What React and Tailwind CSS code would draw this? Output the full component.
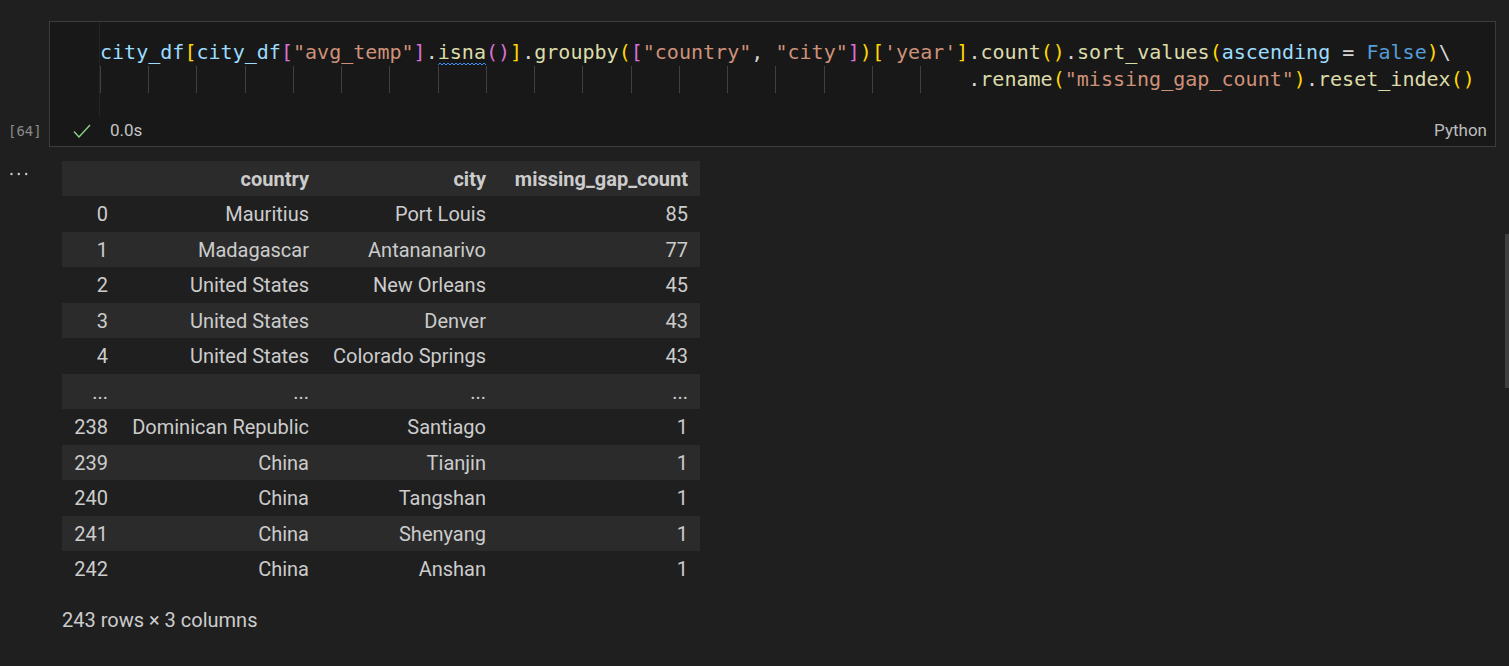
import React from "react";

const mono = { fontFamily: '"DejaVu Sans Mono", "Liberation Mono", monospace' };

function C({ c, children }) {
  return <span className={c}>{children}</span>;
}

function Squiggle() {
  return (
    <svg
      className="absolute left-0 bottom-[-1px]"
      width="49"
      height="5"
      viewBox="0 0 49 5"
    >
      <path d="M0 3 L2 1 L4 3 L6 1 L8 3 L10 1 L12 3 L14 1 L16 3 L18 1 L20 3 L22 1 L24 3 L26 1 L28 3 L30 1 L32 3 L34 1 L36 3 L38 1 L40 3 L42 1 L44 3 L46 1 L48 3" fill="none" stroke="#3794ff" strokeWidth="1" />
    </svg>
  );
}

const rows = [
  ["0", "Mauritius", "Port Louis", "85"],
  ["1", "Madagascar", "Antananarivo", "77"],
  ["2", "United States", "New Orleans", "45"],
  ["3", "United States", "Denver", "43"],
  ["4", "United States", "Colorado Springs", "43"],
  ["...", "...", "...", "..."],
  ["238", "Dominican Republic", "Santiago", "1"],
  ["239", "China", "Tianjin", "1"],
  ["240", "China", "Tangshan", "1"],
  ["241", "China", "Shenyang", "1"],
  ["242", "China", "Anshan", "1"],
];

export default function App() {
  const V = "text-[#9cdcfe]";
  const Y = "text-[#ffd700]";
  const P = "text-[#da70d6]";
  const S = "text-[#ce9178]";
  const F = "text-[#dcdcaa]";
  const W = "text-[#d4d4d4]";
  const K = "text-[#569cd6]";

  return (
    <div
      className="relative w-full h-[666px] overflow-hidden bg-[#1f1f1f] text-[#cccccc] pt-[21px]"
      style={{ fontFamily: 'Roboto, "Noto Sans", sans-serif' }}
    >
      {/* code cell */}
      <div className="flex">
        <div className="w-[49px] flex flex-col justify-end pb-[1px]">
          <div
            className="h-[30px] flex items-center pl-[8px] text-[14px] text-[#8a8a8a]"
            style={mono}
          >
            [64]
          </div>
        </div>
        <div className="w-[1447px] h-[126px] border border-[#3c3c3c] bg-[#181818] flex flex-col">
          <div className="flex">
            <div className="w-[49px]" />
            <div
              className="flex-1 border-l border-[#252525] pt-[17px] pb-[23px] text-[20.05px] leading-[27px] whitespace-pre"
              style={mono}
            >
              <div className="h-[27px]">
                <C c={V}>city_df</C>
                <C c={Y}>[</C>
                <C c={V}>city_df</C>
                <C c={P}>[</C>
                <C c={S}>"avg_temp"</C>
                <C c={P}>]</C>
                <C c={W}>.</C>
                <span className={`relative inline-block ${F}`}>
                  isna
                  <Squiggle />
                </span>
                <C c={P}>()</C>
                <C c={Y}>]</C>
                <C c={W}>.</C>
                <C c={F}>groupby</C>
                <C c={Y}>(</C>
                <C c={P}>[</C>
                <C c={S}>"country"</C>
                <C c={W}>, </C>
                <C c={S}>"city"</C>
                <C c={P}>]</C>
                <C c={Y}>)</C>
                <C c={Y}>[</C>
                <C c={S}>'year'</C>
                <C c={Y}>]</C>
                <C c={W}>.</C>
                <C c={F}>count</C>
                <C c={Y}>()</C>
                <C c={W}>.</C>
                <C c={F}>sort_values</C>
                <C c={Y}>(</C>
                <C c={V}>ascending</C>
                <C c={W}> = </C>
                <C c={K}>False</C>
                <C c={Y}>)</C>
                <C c={W}>\</C>
              </div>
              <div className="h-[27px] flex">
                {Array.from({ length: 18 }).map((_, i) => (
                  <span
                    key={i}
                    className="inline-block w-[4ch] h-[27px] border-l border-[#404040] shrink-0"
                  />
                ))}
                <span>
                  <C c={W}>.</C>
                  <C c={F}>rename</C>
                  <C c={Y}>(</C>
                  <C c={S}>"missing_gap_count"</C>
                  <C c={Y}>)</C>
                  <C c={W}>.</C>
                  <C c={F}>reset_index</C>
                  <C c={Y}>()</C>
                </span>
              </div>
            </div>
          </div>
          <div className="h-[30px] flex items-center pr-[8px]">
            <svg className="ml-[23px]" width="18" height="14" viewBox="0 0 18 14">
              <path d="M1 7.5 L6 13 L17 1" fill="none" stroke="#89d185" strokeWidth="1.4" />
            </svg>
            <span className="ml-[19px] text-[17px] text-[#c4c4c4]">0.0s</span>
            <span className="ml-auto text-[17px] text-[#bdbdbd]">Python</span>
          </div>
        </div>
      </div>

      {/* output */}
      <div className="flex mt-[14px]">
        <div className="w-[62px]">
          <svg className="ml-[10px] mt-[11px]" width="18" height="4" viewBox="0 0 18 4">
            <circle cx="1.5" cy="2" r="1.2" fill="#cccccc" />
            <circle cx="8.8" cy="2" r="1.2" fill="#cccccc" />
            <circle cx="16.2" cy="2" r="1.2" fill="#cccccc" />
          </svg>
        </div>
        <div>
          <table className="border-collapse text-[20px] table-fixed w-[638px]">
            <colgroup>
              <col className="w-[58px]" />
              <col className="w-[201px]" />
              <col className="w-[177px]" />
              <col className="w-[202px]" />
            </colgroup>
            <thead>
              <tr className="bg-[#2b2b2b] h-[35px]">
                <th className="px-[12px] text-right font-bold"></th>
                <th className="px-[12px] text-right font-bold">country</th>
                <th className="px-[12px] text-right font-bold">city</th>
                <th className="px-[12px] text-right font-bold whitespace-nowrap">missing_gap_count</th>
              </tr>
            </thead>
            <tbody>
              {rows.map((r, i) => (
                <tr
                  key={i}
                  className={`h-[35.5px] ${i % 2 === 1 ? "bg-[#2b2b2b]" : "bg-[#1f1f1f]"}`}
                >
                  {r.map((v, j) => (
                    <td key={j} className="px-[12px] pt-[1px] text-right whitespace-nowrap leading-[24px]">
                      {v}
                    </td>
                  ))}
                </tr>
              ))}
            </tbody>
          </table>
          <div className="mt-[21px] text-[20px] leading-[24px]">243 rows × 3 columns</div>
        </div>
      </div>

      {/* scrollbar */}
      <div className="absolute right-0 top-[234px] w-[4px] h-[154px] bg-[#3f3f3f]" />
    </div>
  );
}
